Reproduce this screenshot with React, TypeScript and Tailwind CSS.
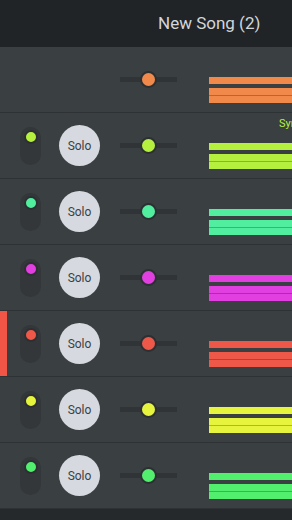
const tracks = [
  { color: '#f0894a', controls: false },
  { color: '#b6f03e', controls: true, label: 'Synth' },
  { color: '#52eea0', controls: true },
  { color: '#e13fdf', controls: true },
  { color: '#ee5848', controls: true, selected: true },
  { color: '#e6f43e', controls: true },
  { color: '#52ee6e', controls: true },
];

function Track({ color, controls, label, selected }: { color: string; controls: boolean; label?: string; selected?: boolean }) {
  return (
    <div className="relative flex h-[66px] items-center border-b border-[#2e3235] bg-[#3a3f42]">
      {selected && <div className="absolute left-0 top-0 h-full w-[7px] bg-[#f05546]" />}
      <div className="ml-[20px] w-[21px]">
        {controls && (
          <div className="flex h-[38px] w-[21px] justify-center rounded-full bg-[#33373a] pt-[3px]">
            <div
              className="h-[14px] w-[14px] rounded-full border-2 border-[#2c3033]"
              style={{ backgroundColor: color }}
            />
          </div>
        )}
      </div>
      <div className="ml-[18px] w-[41px]">
        {controls && (
          <div className="flex h-[41px] w-[41px] items-center justify-center rounded-full bg-[#d6d9df] text-[12px] text-[#3b3f44]">
            Solo
          </div>
        )}
      </div>
      <div className="relative ml-[20px] flex h-[17px] w-[57px] items-center">
        <div className="h-[5px] w-full bg-[#303437]" />
        <div
          className="absolute left-[20px] top-0 h-[17px] w-[17px] rounded-full border-2 border-[#2c3033]"
          style={{ backgroundColor: color }}
        />
      </div>
      <div className="ml-[32px] mt-[30px] flex flex-1 flex-col self-start">
        <div className="h-[7px]" style={{ backgroundColor: color }} />
        <div className="mt-[4px] h-[8px] border-b border-black/25" style={{ backgroundColor: color }} />
        <div className="h-[7px]" style={{ backgroundColor: color }} />
      </div>
      {label && (
        <div className="absolute left-[279px] top-[3px] whitespace-nowrap text-[11px] text-[#b6f03e]">{label}</div>
      )}
    </div>
  );
}

export default function App() {
  return (
    <div className="h-[520px] w-[292px] overflow-hidden bg-[#25292c] font-['Roboto',sans-serif]">
      <header className="flex h-[47px] items-center bg-[#212427] pl-[158px]">
        <h1 className="text-[17px] text-[#d3d6da]">New Song (2)</h1>
      </header>
      {tracks.map((t, i) => (
        <Track key={i} {...t} />
      ))}
    </div>
  );
}
